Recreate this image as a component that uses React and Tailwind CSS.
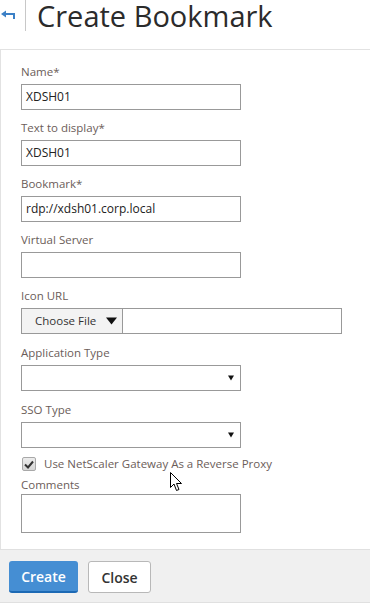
import React from "react";

function Label({ children }) {
  return <div className="h-[16px] text-[11.5px] leading-[16px] text-[#6b5d59] mb-[4px]">{children}</div>;
}

function TextInput({ value }) {
  return (
    <div className="w-[220px] h-[26px] border border-[#999] bg-white flex items-center pl-[4px] text-[12px] text-[#222]">
      {value}
    </div>
  );
}

function Select() {
  return (
    <div className="w-[220px] h-[26px] border border-[#999] bg-white flex items-center justify-end pr-[6px]">
      <svg width="6" height="6" viewBox="0 0 6 6">
        <polygon points="0,0.5 6,0.5 3,5.5" fill="#111" />
      </svg>
    </div>
  );
}

export default function App() {
  return (
    <div className="relative w-[370px] h-[605px] bg-white font-['Open_Sans',sans-serif] overflow-hidden">
      {/* Header */}
      <div className="h-[49px] flex items-start">
        <div className="w-[25px] h-[31px] pt-[10px] pl-[1px]">
          <svg width="14" height="10" viewBox="0 0 14 10">
            <polygon points="0,4 5,0.5 5,7.5" fill="#3b80c6" />
            <rect x="4" y="3" width="10" height="2" fill="#3b80c6" />
            <rect x="12" y="3" width="2" height="6" fill="#3b80c6" />
          </svg>
        </div>
        <div className="w-px h-[31px] bg-[#c8c8c8]" />
        <div className="ml-[11px] text-[29px] leading-[33px] text-[#2b2b2b] -mt-[1px] whitespace-nowrap">Create Bookmark</div>
      </div>

      {/* Form panel */}
      <div className="border-t border-l border-[#e2e2e2] pl-[20px] pt-[14px] pb-[16px]">
        <Label>Name*</Label>
        <div className="mb-[10px]"><TextInput value="XDSH01" /></div>

        <Label>Text to display*</Label>
        <div className="mb-[10px]"><TextInput value="XDSH01" /></div>

        <Label>Bookmark*</Label>
        <div className="mb-[10px]"><TextInput value="rdp://xdsh01.corp.local" /></div>

        <Label>Virtual Server</Label>
        <div className="mb-[10px]"><TextInput value="" /></div>

        <Label>Icon URL</Label>
        <div className="mb-[11px] w-[321px] h-[26px] border border-[#999] flex">
          <div className="w-[101px] h-full bg-[#f3f3f3] border-r border-[#999] flex items-center pl-[13px] text-[11.5px] text-[#333]">
            <span>Choose File</span>
            <svg className="ml-[10px]" width="11" height="8" viewBox="0 0 11 8">
              <polygon points="0,0.5 11,0.5 5.5,7.5" fill="#111" />
            </svg>
          </div>
          <div className="flex-1 bg-white" />
        </div>

        <Label>Application Type</Label>
        <div className="mb-[11px]"><Select /></div>

        <Label>SSO Type</Label>
        <div className="mb-[8px]"><Select /></div>

        <div className="h-[16px] flex items-center mb-[5px]">
          <div className="ml-[1px] w-[14px] h-[14px] rounded-[2px] border border-[#a8a8a8] bg-gradient-to-b from-[#ececec] to-[#d6d6d6] flex items-center justify-center">
            <svg width="10" height="9" viewBox="0 0 10 9">
              <path d="M1 4.5 L4 7.5 L9 1.5" stroke="#333" strokeWidth="2" fill="none" />
            </svg>
          </div>
          <span className="ml-[8px] text-[11.5px] leading-[16px] text-[#6b5d59] whitespace-nowrap">Use NetScaler Gateway As a Reverse Proxy</span>
        </div>

        <div className="h-[16px] text-[11.5px] leading-[16px] text-[#6b5d59] mb-[1px]">Comments</div>
        <div className="w-[220px] h-[39px] border border-[#999] bg-white" />
      </div>

      {/* Footer */}
      <div className="h-[54px] bg-[#f0f0f0] border-t border-b border-[#e0e0e0] flex items-start pt-[11px] pl-[9px] gap-[10px]">
        <div className="w-[69px] h-[32px] rounded-[3px] bg-[#458ed3] border-b-[2px] border-[#1c69b4] flex items-center justify-center text-[14px] font-semibold text-white">
          Create
        </div>
        <div className="w-[63px] h-[32px] rounded-[3px] bg-white border border-[#b8b8b8] flex items-center justify-center text-[14px] font-semibold text-[#333]">
          Close
        </div>
      </div>

      {/* Mouse cursor */}
      <svg className="absolute left-[170px] top-[472px]" width="13" height="20" viewBox="0 0 13 20">
        <path d="M0.5 0.5 L0.5 15.5 L4 12 L6.5 18.5 L9 17.5 L6.5 11.5 L11.5 11.5 Z" fill="#fff" stroke="#000" strokeWidth="1" strokeLinejoin="round" />
      </svg>
    </div>
  );
}
